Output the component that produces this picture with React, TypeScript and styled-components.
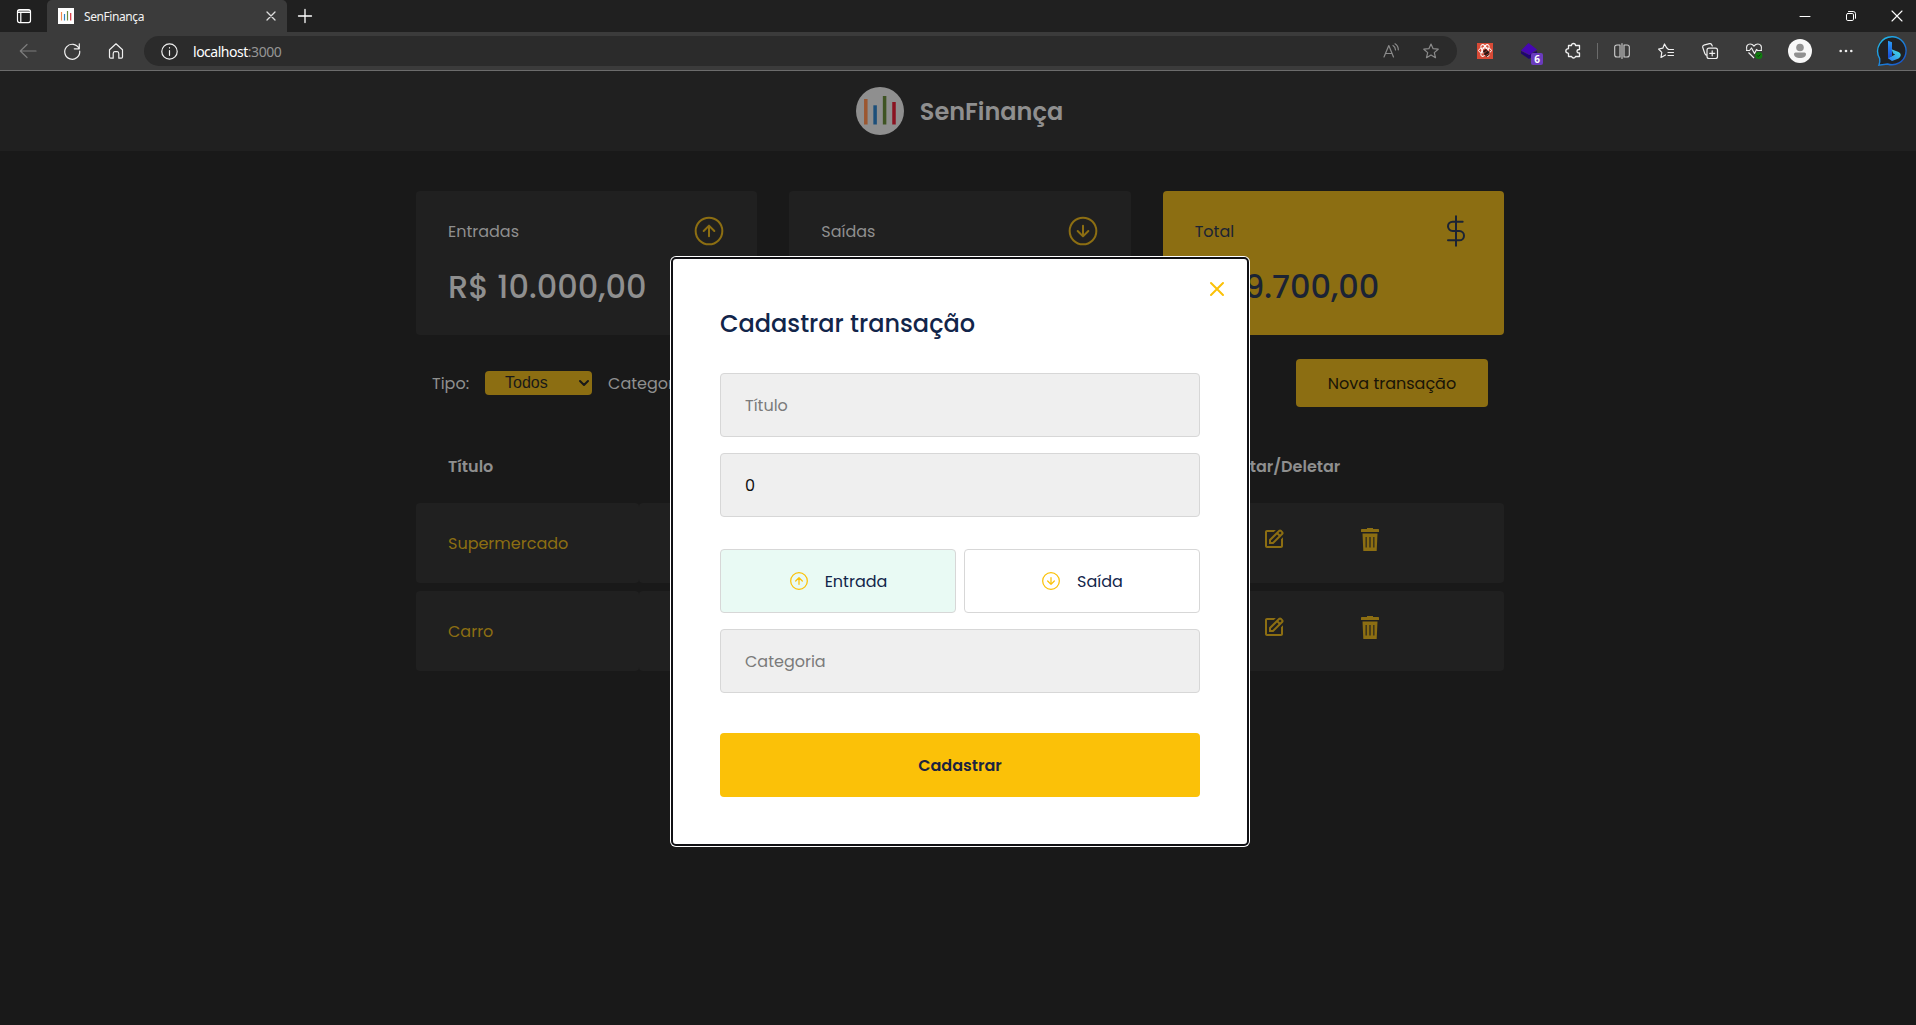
import React from "react";
import styled, { createGlobalStyle, css } from "styled-components";
import { BiEdit } from "react-icons/bi";

const GlobalStyle = createGlobalStyle`
  *, *::before, *::after { box-sizing: border-box; margin: 0; padding: 0; }
  body { background: #191919; overflow: hidden; }
  svg { display: block; flex: none; overflow: visible; }
`;

const gold = "#8c6e12";
const yellow = "#fbc108";
const navy = "#12254a";

const Screen = styled.div`
  width: 1916px;
  height: 1025px;
  display: flex;
  flex-direction: column;
  font-family: Poppins, Inter, sans-serif;
  font-size: 16px;
  color: #8f8f8f;
  background: #191919;
`;

/* ---------- browser frame ---------- */

const TabStrip = styled.div`
  height: 32px;
  flex: none;
  display: flex;
  align-items: center;
  background: #202020;
  color: #fff;
`;

const TabMenu = styled.div`
  width: 47px;
  display: flex;
  justify-content: center;
`;

const Tab = styled.div`
  width: 240px;
  height: 32px;
  display: flex;
  align-items: center;
  padding: 0 12px 0 11px;
  background: #3b3b3b;
  border-radius: 5px 5px 0 0;
`;

const TabTitle = styled.span`
  flex: 1;
  margin-left: 10px;
  font: 12px "Noto Sans", "Open Sans", sans-serif;
  letter-spacing: -0.42px;
  color: #f3f3f3;
`;

const NewTab = styled.div`
  margin-left: 11px;
`;

const WindowControls = styled.div`
  margin-left: auto;
  display: flex;
  align-items: center;
  gap: 36px;
  padding-right: 14px;
`;

const Toolbar = styled.div`
  height: 39px;
  flex: none;
  display: flex;
  align-items: center;
  background: #3b3b3b;
  border-bottom: 1px solid #6c6c6c;
  color: #f0f0f0;
`;

const NavButtons = styled.div`
  width: 144px;
  flex: none;
  display: flex;
  gap: 26px;
  padding-left: 19px;
`;

const AddressBar = styled.div`
  width: 1313px;
  flex: none;
  height: 30px;
  display: flex;
  align-items: center;
  padding: 0 17px 0 17px;
  border-radius: 15px;
  background: #2b2b2b;
`;

const Url = styled.span`
  flex: 1;
  margin-left: 15px;
  font: 14px "Noto Sans", "Open Sans", sans-serif;
  letter-spacing: -0.48px;
  color: #fff;
`;

const Port = styled.span`
  color: #959595;
`;

const AddressActions = styled.div`
  display: flex;
  gap: 23px;
  color: #8b8b8b;
`;

const ToolbarSlot = styled.div<{ $w: number }>`
  width: ${(p) => p.$w}px;
  display: flex;
  justify-content: center;
  flex: none;
`;

const Extensions = styled.div`
  display: flex;
  align-items: center;
  flex: none;
  padding-left: 6px;
`;

const ToolbarDivider = styled.div`
  width: 1px;
  height: 16px;
  flex: none;
  margin-left: 2px;
  background: #6b6b6b;
`;

const ExtensionWithBadge = styled.div`
  position: relative;
  width: 16px;
  height: 16px;
`;

const Badge = styled.span`
  position: absolute;
  left: 10px;
  top: 10px;
  width: 12px;
  height: 12px;
  border-radius: 2px;
  background: #6a3bbd;
  color: #fff;
  font: bold 10px/12px "Open Sans", sans-serif;
  text-align: center;
`;

/* ---------- page ---------- */

const Header = styled.header`
  height: 80px;
  flex: none;
  display: flex;
  align-items: center;
  justify-content: center;
  gap: 16px;
  padding-left: 3px;
  background: #202020;
`;

const Brand = styled.h1`
  font-size: 24px;
  font-weight: 600;
  line-height: 36px;
  padding-top: 2px;
`;

const Main = styled.main`
  width: 1088px;
  margin: 40px 0 0 416px;
  display: flex;
  flex-direction: column;
`;

const Cards = styled.section`
  display: grid;
  grid-template-columns: repeat(3, 1fr);
  gap: 32px;
`;

const Card = styled.article<{ $highlight?: boolean }>`
  height: 144px;
  padding: 24px 32px;
  border-radius: 4px;
  background: ${(p) => (p.$highlight ? gold : "#202020")};
  color: ${(p) => (p.$highlight ? "#1b2334" : "#8f8f8f")};
`;

const CardTop = styled.div`
  height: 32px;
  display: flex;
  align-items: center;
  justify-content: space-between;
`;

const CardValue = styled.strong`
  display: block;
  margin-top: 16px;
  font-size: 32px;
  font-weight: 500;
  line-height: 48px;
  white-space: nowrap;
`;

const Filters = styled.section`
  height: 48px;
  margin: 24px 16px 0;
  display: flex;
  align-items: center;
`;

const TypeSelect = styled.div`
  width: 107px;
  height: 24px;
  margin: 0 16px;
  display: flex;
  align-items: center;
  justify-content: space-between;
  padding: 0 2px 0 20px;
  border-radius: 4px;
  background: ${gold};
  color: #191919;
  font: 16px "Liberation Sans", Arial, sans-serif;
`;

const NewButton = styled.button`
  width: 192px;
  height: 48px;
  margin-left: auto;
  border: 0;
  border-radius: 4px;
  background: ${gold};
  color: #191407;
  font: inherit;
`;

const Table = styled.section`
  margin-top: 27px;
  display: flex;
  flex-direction: column;
  gap: 8px;
`;

const columns = css`
  display: grid;
  grid-template-columns: 223px 248px 303px 314px;
`;

const TableHead = styled.div`
  ${columns}
  height: 61px;
  padding-top: 3px;
  align-items: center;
  font-weight: 600;
`;

const HeadCell = styled.span<{ $pad?: number }>`
  padding-left: ${(p) => p.$pad ?? 32}px;
`;

const Row = styled.div`
  ${columns}
  height: 80px;
`;

const Cell = styled.div`
  display: flex;
  align-items: center;
  padding-left: 32px;
  border-radius: 4px;
  background: #202020;
  color: ${gold};
`;

const Actions = styled(Cell)`
  gap: 75px;
  padding: 0 0 8px 72px;
`;

/* ---------- dialog ---------- */

const DialogRing = styled.div`
  position: absolute;
  left: 670px;
  top: 256px;
  width: 580px;
  height: 591px;
  padding: 1px;
  border-radius: 6px;
  background: #fff;
`;

const Dialog = styled.div`
  position: relative;
  width: 578px;
  height: 589px;
  border: 2px solid #101014;
  border-radius: 5px;
  background: #fff;
  padding: 46px 47px 0;
  color: ${navy};
`;

const CloseButton = styled.span`
  position: absolute;
  right: 23px;
  top: 23px;
`;

const DialogTitle = styled.h2`
  height: 36px;
  margin-bottom: 32px;
  font-size: 24px;
  font-weight: 500;
  line-height: 38px;
`;

const Field = styled.div<{ $filled?: boolean }>`
  height: 64px;
  margin-bottom: 16px;
  padding: 0 24px;
  display: flex;
  align-items: center;
  border: 1px solid #d7d7d7;
  border-radius: 4px;
  background: #efefef;
  color: ${(p) => (p.$filled ? "#111" : "#7b7b7b")};
`;

const TypeOptions = styled.div`
  display: grid;
  grid-template-columns: 1fr 1fr;
  gap: 8px;
  margin: 32px 0 16px;
`;

const TypeOption = styled.button<{ $active?: boolean }>`
  height: 64px;
  display: flex;
  align-items: center;
  justify-content: center;
  gap: 16px;
  border: 1px solid #d7d7d7;
  border-radius: 4px;
  background: ${(p) => (p.$active ? "#e9faf4" : "#fff")};
  color: ${navy};
  font: inherit;
`;

const Submit = styled.button`
  width: 100%;
  height: 64px;
  margin-top: 24px;
  border: 0;
  border-radius: 4px;
  background: ${yellow};
  color: #1b2440;
  font: inherit;
  font-weight: 600;
`;

/* ---------- drawings ---------- */

type IconProps = { size: number; color: string };

const ArrowCircle = ({ size, color, down }: IconProps & { down?: boolean }) => (
  <svg width={size} height={size} viewBox="0 0 24 24" fill="none" stroke={color} strokeWidth="1.5" strokeLinecap="round" strokeLinejoin="round">
    <circle cx="12" cy="12" r="10" />
    {down ? <path d="M8 12l4 4 4-4M12 8v8" /> : <path d="M16 12l-4-4-4 4M12 16V8" />}
  </svg>
);

const Dollar = () => (
  <svg width="32" height="32" viewBox="0 0 24 24" fill="none" stroke="#1b2334" strokeWidth="1.5" strokeLinecap="round" strokeLinejoin="round">
    <path d="M12 1v22M17 5H9.5a3.5 3.5 0 0 0 0 7h5a3.5 3.5 0 0 1 0 7H6" />
  </svg>
);

const Trash = () => (
  <svg width="18" height="23" viewBox="0 0 18 23" fill={gold}>
    <path d="M6 0h6v1h5.3q.7 0 .7.8V4H0V1.800Q0 1 .7 1H6z" />
    <path fillRule="evenodd" d="M1.500 5.500h15L15.700 23H2.300zM4.600 9v10.500h1.100V9zM8.400 9v10.500h1.200V9zM12.300 9v10.500h1.100V9z" />
  </svg>
);

const Logo = () => (
  <svg width="48" height="48" viewBox="0 0 48 48">
    <circle cx="24" cy="24" r="24" fill="#8f8f8f" />
    <path d="M9.800 12v25.500" stroke="#9c5730" strokeWidth="3.500" />
    <path d="M19.100 18.300v19.200" stroke="#1c4f7a" strokeWidth="3.500" />
    <path d="M28.600 9v28.500" stroke="#3f5423" strokeWidth="3.500" />
    <path d="M38 15v22.500" stroke="#8a1220" strokeWidth="3.500" />
  </svg>
);

const Favicon = () => (
  <svg width="16" height="16" viewBox="0 0 16 16">
    <path d="M0 0h16v16H0z" fill="#fff" />
    <path d="M3.500 4v8.500" stroke="#ee8a50" strokeWidth="1.200" />
    <path d="M6.500 6v6.500" stroke="#2d82c0" strokeWidth="1.200" />
    <path d="M9.500 3v9.500" stroke="#6a8a3e" strokeWidth="1.200" />
    <path d="M12.700 5v7.500" stroke="#d6303e" strokeWidth="1.200" />
  </svg>
);

const Line = ({ w, h, d, sw = 1.2, color = "currentColor" }: { w: number; h: number; d: string; sw?: number; color?: string }) => (
  <svg width={w} height={h} viewBox={`0 0 ${w} ${h}`} fill="none" stroke={color} strokeWidth={sw} strokeLinecap="round" strokeLinejoin="round">
    <path d={d} />
  </svg>
);

const starPath = "M8 1l2.100 4.700 5.100.5-3.900 3.400 1.200 5.100L8 12l-4.500 2.700 1.200-5.100L.8 6.200l5.100-.5z";

const ReactExtension = () => (
  <svg width="16" height="16" viewBox="0 0 16 16">
    <path d="M0 0h16v16H0z" fill="#d84a36" />
    <g fill="none" stroke="#fff" strokeWidth="1">
      <ellipse cx="8" cy="7.500" rx="6.500" ry="2.600" />
      <ellipse cx="8" cy="7.500" rx="6.500" ry="2.600" transform="rotate(60 8 7.500)" />
      <ellipse cx="8" cy="7.500" rx="6.500" ry="2.600" transform="rotate(120 8 7.500)" />
    </g>
    <path d="M6 8l3-2 3.500 3v2.500L9.500 14 7 11.500z" fill="#2b1512" />
    <path d="M6 11l5-4M8 13l5-3" stroke="#d84a36" strokeWidth=".7" />
  </svg>
);

const LayersExtension = () => (
  <svg width="16" height="16" viewBox="0 0 16 16">
    <path d="M0 8l8 4 8-4v2.500L8 16 0 10.500z" fill="#1f0570" />
    <path d="M7.500 0L16 6.500 8.500 12 0 7.500z" fill="#4606b3" />
  </svg>
);

const HealthIcon = () => (
  <svg width="16" height="16" viewBox="0 0 16 16" fill="none">
    <path d="M.8 7C-.3 3.200 1.500 1 4.200 1 6 1 7 1.800 8 3c1-1.200 2-2 3.800-2 2.700 0 4.500 2.200 3.400 6M2.500 9.500L8 15M0 7.500h3.500L5.500 5l3 5.500 2-4 1 1H16" stroke="#eee" strokeWidth="1.200" strokeLinejoin="round" />
    <circle cx="12.800" cy="12.500" r="3.600" fill="#107c10" />
    <path d="M11.300 12.500l1 1 2-2" stroke="#062c06" />
  </svg>
);

const Avatar = () => (
  <svg width="24" height="24" viewBox="0 0 24 24">
    <circle cx="12" cy="12" r="12" fill="#f8f8f8" />
    <circle cx="12" cy="8.500" r="3.800" fill="#919191" />
    <path d="M7.500 13.500h9q1.500 0 1.500 1.500c0 2.700-2.600 4-6 4s-6-1.300-6-4q0-1.500 1.500-1.500z" fill="#919191" />
  </svg>
);

const Bing = () => (
  <svg width="30" height="30" viewBox="0 0 30 30">
    <defs>
      <linearGradient id="ring" x1="0" y1="0" x2="1" y2="1">
        <stop offset="0" stopColor="#22c4ee" />
        <stop offset="1" stopColor="#1648c8" />
      </linearGradient>
      <linearGradient id="stem" x1="0" y1="0" x2="0" y2="1">
        <stop offset="0" stopColor="#2a9cf5" />
        <stop offset="1" stopColor="#1745d6" />
      </linearGradient>
      <linearGradient id="bowl" x1="1" y1="0" x2="0" y2="1">
        <stop offset="0" stopColor="#45e6df" />
        <stop offset="1" stopColor="#2b7cf5" />
      </linearGradient>
    </defs>
    <path d="M15 .8a14 14 0 1 1-5.500 27.200L.9 29.200c1-2.500 1.200-4 .8-6.500A14.500 14.500 0 0 1 15 .8z" fill="#202124" stroke="url(#ring)" strokeWidth="1.400" />
    <path d="M10 4.700l4 1.500v13.500L10 22.800z" fill="url(#stem)" />
    <path d="M10 22.300L17.200 18.500l-2-1-1.700-4.200 7 2.700c3.500 1.800 2.500 5.300-.5 6.800L14 25z" fill="url(#bowl)" />
  </svg>
);

/* ---------- screen parts ---------- */

const BrowserFrame = () => (
  <>
    <TabStrip>
      <TabMenu>
        <Line w={14} h={14} d="M2.500.6h9q2 0 2 2v9q0 2-2 2h-9q-2 0-2-2v-9q0-2 2-2zM1 3.500h12M3.800 3.500V13M1 2h12" />
      </TabMenu>
      <Tab>
        <Favicon />
        <TabTitle>SenFinança</TabTitle>
        <Line w={8} h={8} d="M0 0l8 8M8 0L0 8" sw={1.3} color="#ddd" />
      </Tab>
      <NewTab>
        <Line w={14} h={14} d="M7 .5v13M.5 7h13" sw={1.3} />
      </NewTab>
      <WindowControls>
        <Line w={10} h={10} d="M0 5.500h10" sw={1} />
        <Line w={10} h={10} d="M1.800 2.500h4.400q1.300 0 1.300 1.300v4.400q0 1.300-1.300 1.300H1.800Q.5 9.500.5 8.200V3.800q0-1.300 1.300-1.300zM2.500.5h4.700Q9.500.5 9.500 2.800v4.500" sw={1} />
        <Line w={10} h={10} d="M0 0l10 10M10 0L0 10" sw={1.1} />
      </WindowControls>
    </TabStrip>
    <Toolbar>
      <NavButtons>
        <Line w={18} h={16} d="M17 8H1.500M8 1.500L1.300 8 8 14.500" color="#7d7d7d" />
        <Line w={18} h={16} d="M16 5.500A7.500 7.500 0 1 0 16.700 8M16.300.8v5h-5" />
        <Line w={18} h={16} d="M2.500 6.700L9 .8l6.500 5.900v7.300q0 1.200-1.200 1.200h-2.500v-4.500q0-2-1.500-2h-2.600q-1.500 0-1.500 2v4.500H3.700q-1.200 0-1.200-1.200z" />
      </NavButtons>
      <AddressBar>
        <Line w={17} h={17} d="M8.500.8a7.700 7.700 0 1 1 0 15.400a7.700 7.700 0 1 1 0-15.400zM8.500 7.500v4.800M8.500 4.700v.2" />
        <Url>localhost<Port>:3000</Port></Url>
        <AddressActions>
          <Line w={17} h={16} d="M1 14L5.800 2.500 10.500 14M2.600 10.500h6.300M10 2.500q2.500 1.500 2.500 4.500M12 .8q3.300 2 3.300 6" />
          <Line w={17} h={16} d={starPath} />
        </AddressActions>
      </AddressBar>
      <Extensions>
        <ToolbarSlot $w={44}><ReactExtension /></ToolbarSlot>
        <ToolbarSlot $w={44}>
          <ExtensionWithBadge>
            <LayersExtension />
            <Badge>6</Badge>
          </ExtensionWithBadge>
        </ToolbarSlot>
        <ToolbarSlot $w={44}>
          <Line w={16} h={16} d="M3.500 2.500h3q0-2 2-2t2 2h4v4q-2.500 0-2.500 1.800t2.500 1.700v3.500h-4q0 0-.2.400-.5 1.100-1.800 1.100t-1.900-1.500h-3.100v-3.200Q.8 10 .8 8t2.700-2.300z" sw={1.3} />
        </ToolbarSlot>
        <ToolbarDivider />
        <ToolbarSlot $w={48}>
          <Line w={16} h={16} d="M6 2H3Q.7 2 .7 4v8q0 2 2.300 2h3M10 2h3q2.300 0 2.300 2v8q0 2-2.300 2h-3M6 2v12M10 2v12M8 .5v15" sw={1.1} color="#cfcfcf" />
        </ToolbarSlot>
        <ToolbarSlot $w={40}>
          <Line w={16} h={16} d="M15.500 6.500h-5L8.600 4.800 6.500 1 4.800 5.200.6 6l3.200 3.400L3 14.500l4.500-2.500M10 9.500h5.500M10 12.500h5.500" />
        </ToolbarSlot>
        <ToolbarSlot $w={48}>
          <Line w={16} h={16} d="M7 5.200h6.500q2 0 2 2v6.300q0 2-2 2H7q-2 0-2-2V7.200q0-2 2-2zM10.200 7.800v5M7.700 10.300h5M4.800 12.300q-1.500 0-1.900-1.600L.7 4.300Q.3 2.800 1.800 2.200L7.500.7q1.500-.4 2.200 1l.6 1.300" />
        </ToolbarSlot>
        <ToolbarSlot $w={40}><HealthIcon /></ToolbarSlot>
        <ToolbarSlot $w={52}><Avatar /></ToolbarSlot>
        <ToolbarSlot $w={40}>
          <svg width="14" height="4" viewBox="0 0 14 4" fill="#eee">
            <circle cx="1.700" cy="2" r="1.300" />
            <circle cx="7" cy="2" r="1.300" />
            <circle cx="12.300" cy="2" r="1.300" />
          </svg>
        </ToolbarSlot>
        <ToolbarSlot $w={54}><Bing /></ToolbarSlot>
      </Extensions>
    </Toolbar>
  </>
);

const TransactionRow = ({ title }: { title: string }) => (
  <Row>
    <Cell>{title}</Cell>
    <Cell />
    <Cell />
    <Actions>
      <BiEdit size={24} color={gold} />
      <Trash />
    </Actions>
  </Row>
);

const NewTransactionDialog = () => (
  <DialogRing role="dialog">
    <Dialog>
      <CloseButton>
        <Line w={14} h={14} d="M1 1l12 12M13 1L1 13" sw={2} color={yellow} />
      </CloseButton>
      <DialogTitle>Cadastrar transação</DialogTitle>
      <Field>Título</Field>
      <Field $filled>0</Field>
      <TypeOptions>
        <TypeOption $active>
          <ArrowCircle size={20} color={yellow} />
          Entrada
        </TypeOption>
        <TypeOption>
          <ArrowCircle size={20} color={yellow} down />
          Saída
        </TypeOption>
      </TypeOptions>
      <Field>Categoria</Field>
      <Submit>Cadastrar</Submit>
    </Dialog>
  </DialogRing>
);

export default function App() {
  return (
    <Screen>
      <GlobalStyle />
      <BrowserFrame />
      <Header>
        <Logo />
        <Brand>SenFinança</Brand>
      </Header>
      <Main>
        <Cards>
          <Card>
            <CardTop>
              <span>Entradas</span>
              <ArrowCircle size={32} color={gold} />
            </CardTop>
            <CardValue>R$ 10.000,00</CardValue>
          </Card>
          <Card>
            <CardTop>
              <span>Saídas</span>
              <ArrowCircle size={32} color={gold} down />
            </CardTop>
          </Card>
          <Card $highlight>
            <CardTop>
              <span>Total</span>
              <Dollar />
            </CardTop>
            <CardValue>R$ 9.700,00</CardValue>
          </Card>
        </Cards>
        <Filters>
          <span>Tipo:</span>
          <TypeSelect>
            Todos
            <Line w={12} h={7} d="M2 1l4 4 4-4" sw={2} color="#191919" />
          </TypeSelect>
          <span>Categoria:</span>
          <NewButton>Nova transação</NewButton>
        </Filters>
        <Table>
          <TableHead>
            <HeadCell>Título</HeadCell>
            <span />
            <span />
            <HeadCell $pad={36}>Editar/Deletar</HeadCell>
          </TableHead>
          <TransactionRow title="Supermercado" />
          <TransactionRow title="Carro" />
        </Table>
      </Main>
      <NewTransactionDialog />
    </Screen>
  );
}
